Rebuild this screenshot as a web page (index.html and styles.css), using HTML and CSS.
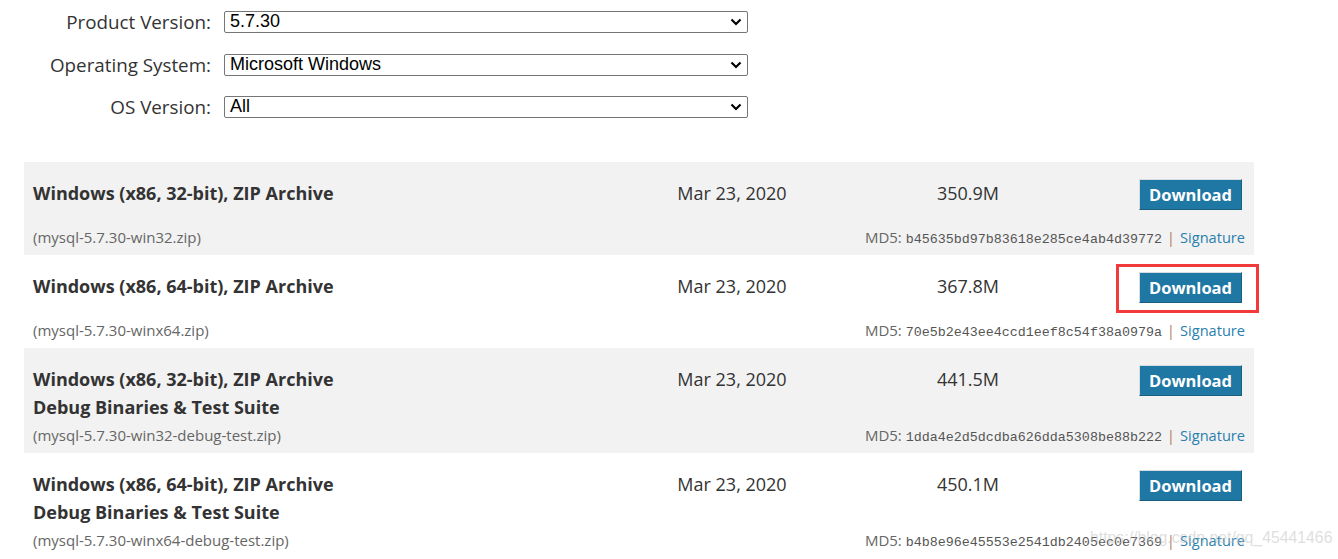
FILE: index.html
```html
<!DOCTYPE html>
<html>
<head>
<meta charset="utf-8">
<link rel="stylesheet" href="styles.css">
</head>
<body>
<div class="page">
  <form class="filters">
    <div class="field">
      <label class="label">Product Version:</label>
      <div class="select"><span class="value">5.7.30</span><svg class="chev" width="12" height="8" viewBox="0 0 12 8"><path d="M1.5 1.5 L6 6 L10.5 1.5" fill="none" stroke="#000" stroke-width="2.2"/></svg></div>
    </div>
    <div class="field">
      <label class="label">Operating System:</label>
      <div class="select"><span class="value">Microsoft Windows</span><svg class="chev" width="12" height="8" viewBox="0 0 12 8"><path d="M1.5 1.5 L6 6 L10.5 1.5" fill="none" stroke="#000" stroke-width="2.2"/></svg></div>
    </div>
    <div class="field">
      <label class="label">OS Version:</label>
      <div class="select"><span class="value">All</span><svg class="chev" width="12" height="8" viewBox="0 0 12 8"><path d="M1.5 1.5 L6 6 L10.5 1.5" fill="none" stroke="#000" stroke-width="2.2"/></svg></div>
    </div>
  </form>

  <div class="downloads">
    <div class="entry odd">
      <div class="title"><div>Windows (x86, 32-bit), ZIP Archive</div></div>
      <div class="date">Mar 23, 2020</div>
      <div class="size">350.9M</div>
      <div class="action"><a class="btn">Download</a></div>
      <div class="file">(mysql-5.7.30-win32.zip)</div>
      <div class="md5">MD5: <code>b45635bd97b83618e285ce4ab4d39772</code> <span class="sep">|</span> <a class="sig">Signature</a></div>
    </div>
    <div class="entry">
      <div class="title"><div>Windows (x86, 64-bit), ZIP Archive</div></div>
      <div class="date">Mar 23, 2020</div>
      <div class="size">367.8M</div>
      <div class="action"><a class="btn">Download</a><span class="highlight"></span></div>
      <div class="file">(mysql-5.7.30-winx64.zip)</div>
      <div class="md5">MD5: <code>70e5b2e43ee4ccd1eef8c54f38a0979a</code> <span class="sep">|</span> <a class="sig">Signature</a></div>
    </div>
    <div class="entry odd">
      <div class="title"><div>Windows (x86, 32-bit), ZIP Archive</div><div>Debug Binaries &amp; Test Suite</div></div>
      <div class="date">Mar 23, 2020</div>
      <div class="size">441.5M</div>
      <div class="action"><a class="btn">Download</a></div>
      <div class="file">(mysql-5.7.30-win32-debug-test.zip)</div>
      <div class="md5">MD5: <code>1dda4e2d5dcdba626dda5308be88b222</code> <span class="sep">|</span> <a class="sig">Signature</a></div>
    </div>
    <div class="entry">
      <div class="title"><div>Windows (x86, 64-bit), ZIP Archive</div><div>Debug Binaries &amp; Test Suite</div></div>
      <div class="date">Mar 23, 2020</div>
      <div class="size">450.1M</div>
      <div class="action"><a class="btn">Download</a></div>
      <div class="file">(mysql-5.7.30-winx64-debug-test.zip)</div>
      <div class="md5">MD5: <code>b4b8e96e45553e2541db2405ec0e7369</code> <span class="sep">|</span> <a class="sig">Signature</a></div>
    </div>
  </div>
  <div class="watermark">https://blog.csdn.net/qq_45441466</div>
</div>
</body>
</html>
```
FILE: styles.css
```css
* { box-sizing: border-box; }
html, body { margin: 0; padding: 0; background: #fff; }
body { font-family: "Open Sans", "Liberation Sans", sans-serif; color: #333; overflow: hidden; height: 559px; }
.page { position: relative; padding-left: 24px; width: 1338px; height: 559px; overflow: hidden; }

.filters { display: flex; flex-direction: column; gap: 20.5px; padding-top: 11px; }
.field { display: flex; align-items: center; height: 22px; }
.label { width: 188px; text-align: right; font-size: 18.8px; color: #333; padding-right: 1px; line-height: 22px; white-space: nowrap; }
.select {
  margin-left: 12px; width: 524px; height: 22px; border: 1px solid #767676; border-radius: 2px;
  display: flex; align-items: center; justify-content: space-between; padding: 0 5px 0 5px;
  font-family: "Liberation Sans", Arial, sans-serif; font-size: 18px; color: #000; background: #fff;
}
.select .value { line-height: 20px; margin-top: -2px; }

.downloads { margin-top: 44px; width: 1230px; }
.entry {
  display: grid;
  grid-template-columns: 577px 244px 228px 160px;
  grid-template-rows: minmax(44px, auto) 20px;
  row-gap: 4px;
  padding: 17px 12px 8px 9px;
}
.entry.odd { background: #f2f2f2; }
.title { font-weight: 700; font-size: 18px; line-height: 28px; color: #333; }
.date, .size { text-align: center; font-size: 18px; line-height: 28px; color: #333; }
.action { position: relative; display: flex; justify-content: flex-end; align-items: flex-start; }
.btn {
  display: inline-flex; align-items: center; justify-content: center;
  width: 103px; height: 31px; background: #1f78a4; color: #fff; font-weight: 700; font-size: 16.5px;
  border-style: solid; border-width: 1px; border-color: #d6dde2 #1b5f80 #1b5f80 #d6dde2;
  text-decoration: none;
}
.highlight {
  position: absolute; right: -17px; top: -8px; width: 143px; height: 49px;
  border: 3px solid #f23a3a;
}
.file { grid-column: 1 / 2; height: 20px; font-size: 15px; line-height: 20px; color: #666; }
.md5 { grid-column: 2 / 5; justify-self: end; margin-right: -3px; height: 20px; font-size: 15px; line-height: 20px; color: #666; white-space: nowrap; }
.md5 code { font-family: "Liberation Mono", "Courier New", monospace; font-size: 13.35px; line-height: 1; color: #555; }
.sep { color: #b4785a; padding: 0 1px; }
.sig { color: #2a7fae; text-decoration: none; font-size: 14.6px; }

.watermark {
  position: absolute; left: 1090px; top: 529px;
  font-family: "Liberation Sans", Arial, sans-serif; font-size: 15.8px; color: rgba(190,190,190,0.5);
  white-space: nowrap; pointer-events: none;
}
```
